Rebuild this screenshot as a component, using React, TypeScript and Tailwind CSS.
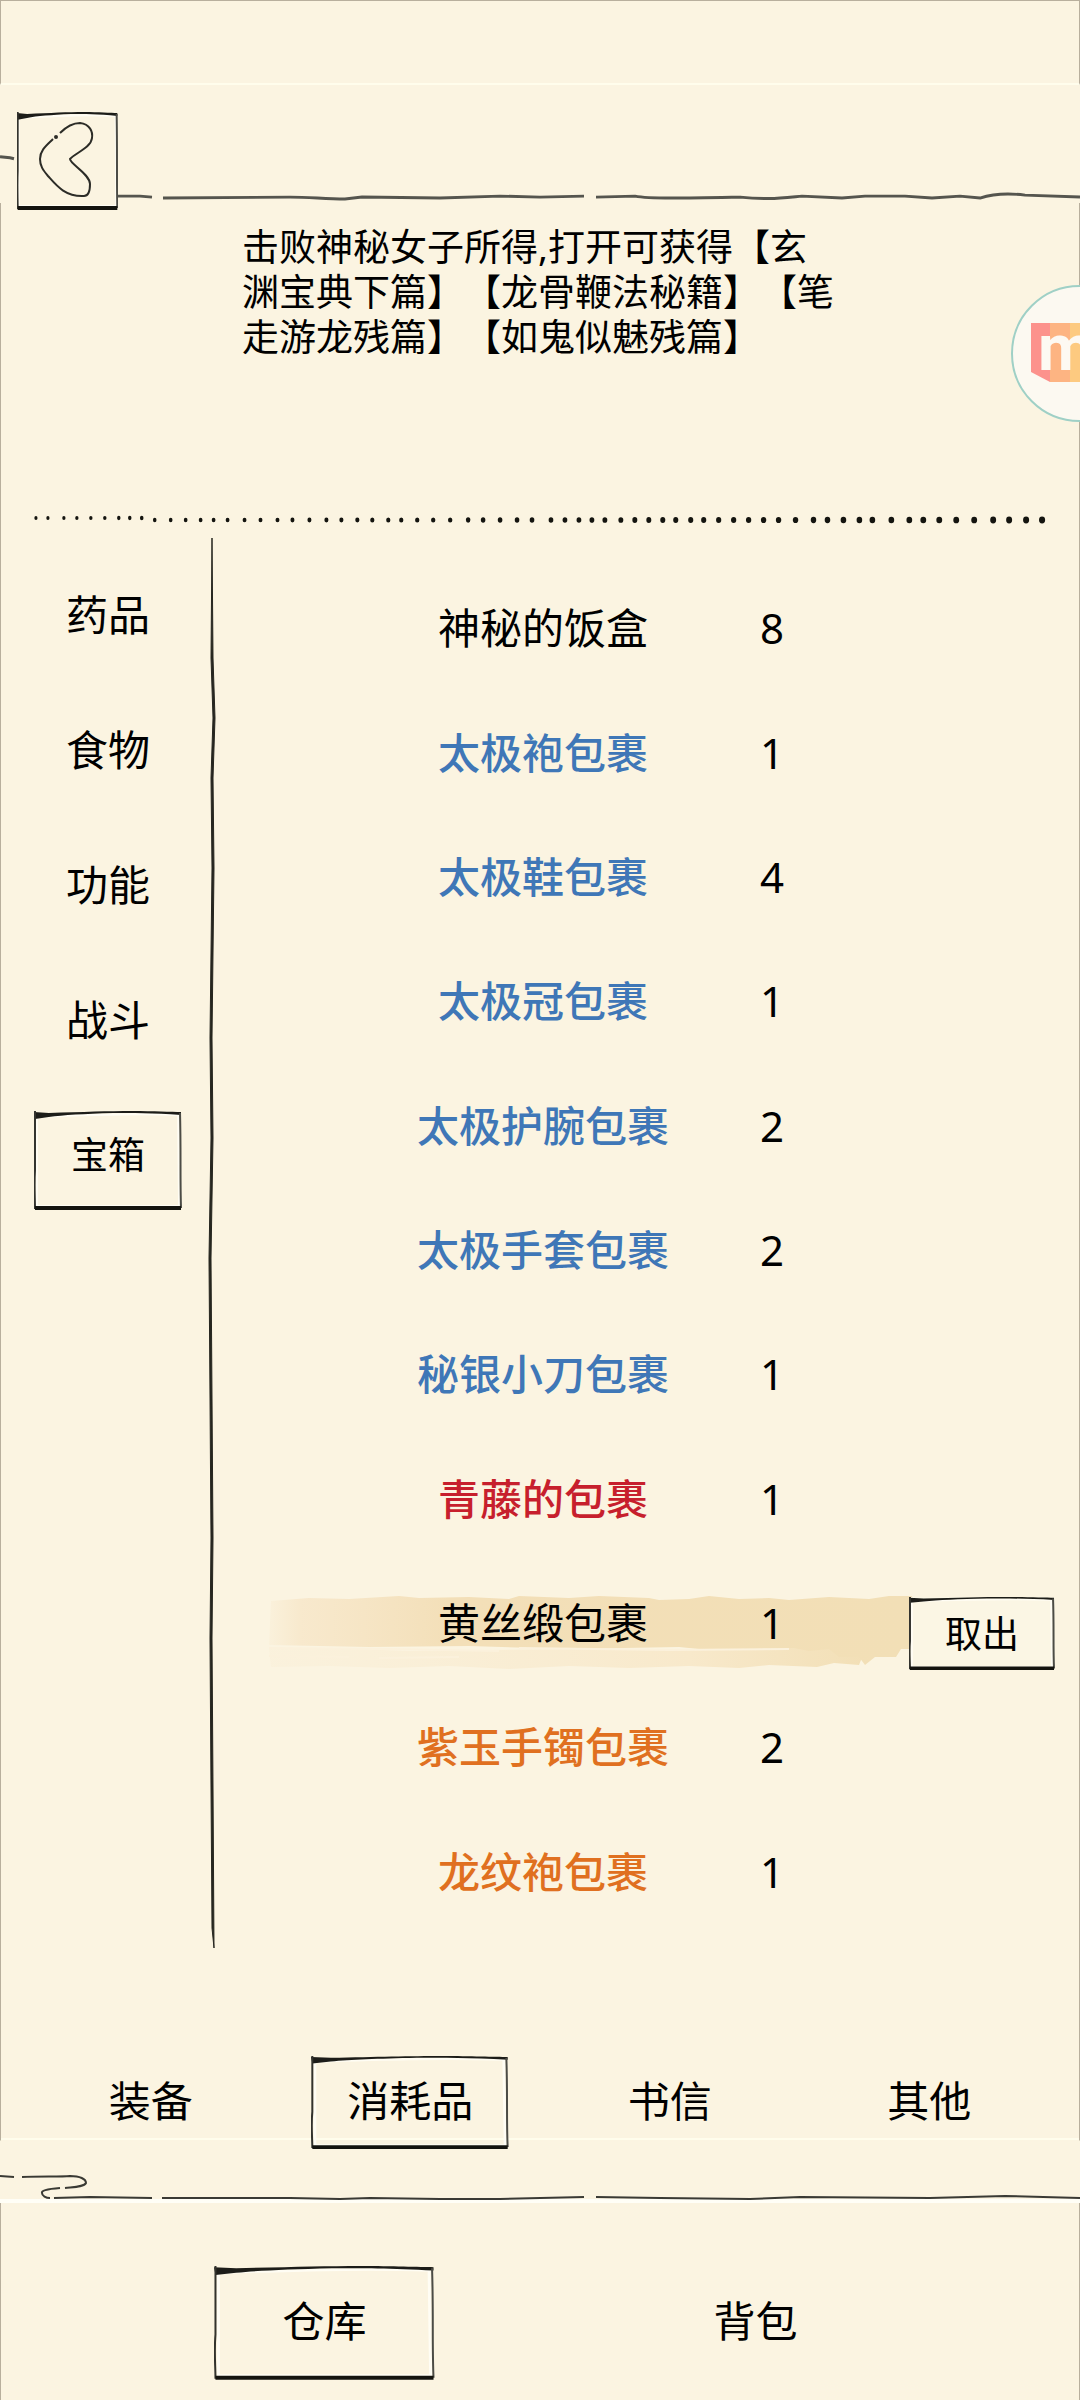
import { useState } from 'react';
import clsx from 'clsx';

type Item = {
  name: string;
  count: number;
  color: string;
};

const items: Item[] = [
  { name: '神秘的饭盒', count: 8, color: 'text-black' },
  { name: '太极袍包裹', count: 1, color: 'text-[#3f77b7] font-medium' },
  { name: '太极鞋包裹', count: 4, color: 'text-[#3f77b7] font-medium' },
  { name: '太极冠包裹', count: 1, color: 'text-[#3f77b7] font-medium' },
  { name: '太极护腕包裹', count: 2, color: 'text-[#3f77b7] font-medium' },
  { name: '太极手套包裹', count: 2, color: 'text-[#3f77b7] font-medium' },
  { name: '秘银小刀包裹', count: 1, color: 'text-[#3f77b7] font-medium' },
  { name: '青藤的包裹', count: 1, color: 'text-[#c71f2d] font-medium' },
  { name: '黄丝缎包裹', count: 1, color: 'text-black' },
  { name: '紫玉手镯包裹', count: 2, color: 'text-[#e07020] font-medium' },
  { name: '龙纹袍包裹', count: 1, color: 'text-[#e07020] font-medium' },
];

const categories = ['药品', '食物', '功能', '战斗', '宝箱'];
const kinds = ['装备', '消耗品', '书信', '其他'];
const stores = ['仓库', '背包'];

const dots = [
  35, 47, 63, 76, 90, 104, 118, 129, 141, 154, 170, 185, 200, 213, 227, 244, 260, 277, 292, 309,
  326, 341, 357, 372, 388, 401, 417, 433, 450, 468, 483, 500, 517, 532, 551, 565, 579, 592, 605,
  621, 635, 649, 663, 676, 691, 704, 719, 734, 749, 764, 779, 796, 814, 828, 844, 860, 873, 892,
  910, 924, 940, 957, 975, 994, 1010, 1027, 1043,
];

// Ink-brushed box, stretched to whatever it frames
function InkFrame() {
  return (
    <svg
      className="absolute inset-0 w-full h-full pointer-events-none"
      viewBox="0 0 150 100"
      preserveAspectRatio="none"
      fill="none"
      aria-hidden="true"
    >
      <path d="M3 6 C50 4 100 2 146 4 L147 96 L3 96 Z" stroke="#fffdf4" strokeWidth="2" />
      <path d="M0 1 L15 2 C50 1 75 0 100 0 C120 0 140 1 149 1 L149 4 C120 2 100 2 80 2 C50 3 30 4 15 6 L1 8 Z" fill="#1c1c18" />
      <path d="M1 0 L1 60 C0 75 1 88 1 99" stroke="#33332e" strokeWidth="2" vectorEffect="non-scaling-stroke" />
      <path d="M148 2 C149 40 148 70 149 98" stroke="#4c4c46" strokeWidth="2" vectorEffect="non-scaling-stroke" />
      <path d="M1 98 L149 98" stroke="#14140f" strokeWidth="4" vectorEffect="non-scaling-stroke" />
    </svg>
  );
}

function BrushStroke() {
  return (
    <svg
      className="absolute left-[51px] w-[643px] h-[74px] mt-[18px] pointer-events-none"
      viewBox="0 0 643 74"
      preserveAspectRatio="none"
      aria-hidden="true"
    >
      <defs>
        <linearGradient id="wash" x1="0" x2="1">
          <stop offset="0" stopColor="#f7e6c6" stopOpacity="0.2" />
          <stop offset="0.05" stopColor="#f7e6c8" stopOpacity="0.8" />
          <stop offset="0.28" stopColor="#f3dfb8" />
          <stop offset="1" stopColor="#f2dfb6" />
        </linearGradient>
        <linearGradient id="wash-dry" x1="0" x2="1">
          <stop offset="0" stopColor="#f9ecd2" stopOpacity="0.3" />
          <stop offset="0.7" stopColor="#f8e9cb" />
          <stop offset="1" stopColor="#f2dfb6" />
        </linearGradient>
      </defs>
      <path
        d="M0 54 L60 53 L140 56 L300 54 L450 55 L600 50 L594 60 L590 70 L565 68 L548 72 L500 70 L470 73 L420 71 L360 73 L300 71 L240 74 L180 71 L120 73 L60 71 L2 72 Z"
        fill="url(#wash-dry)"
      />
      <path
        d="M2 6 L40 3 L80 4 L130 1 L150 3 L200 2 L240 4 L250 1 L300 3 L330 1 L380 3 L390 5 L420 4 L440 1 L470 4 L500 3 L520 5 L560 2 L600 4 L620 1 L643 1 L643 54 L632 54 L627 62 L606 62 L596 70 L590 62 L570 62 L560 54 L540 56 L525 53 L440 55 L410 52 L300 54 L200 51 L100 52 L0 50 Z"
        fill="url(#wash)"
      />
      <g stroke="#fbf1dc" strokeWidth="2" fill="none">
        <path d="M0 53 L120 54 L230 56 M250 53 L400 55 L520 54" />
        <path d="M0 61 L80 62 M110 63 L190 62" />
      </g>
    </svg>
  );
}

function TopRule() {
  return (
    <svg
      className="absolute inset-0 w-full h-full"
      viewBox="0 0 1080 120"
      preserveAspectRatio="none"
      fill="none"
      stroke="#55554e"
      strokeWidth="3"
      aria-hidden="true"
    >
      <path d="M0 73 L10 74 L14 75" />
      <path d="M117 113 L140 113 L152 114" />
      <path d="M163 115 L290 114 C310 114 325 116 345 116 L362 114 L440 115 L500 113 L540 114 L584 113" />
      <path d="M596 114 L635 113 C650 116 690 115 740 114 C765 117 780 115 802 113 L842 115 L865 113 L905 113 L932 115 L960 113 L980 115 C995 110 1010 110 1025 112 L1080 114" />
    </svg>
  );
}

function CloudRule() {
  return (
    <svg
      className="block w-full h-[62px]"
      viewBox="0 0 1080 62"
      preserveAspectRatio="none"
      fill="none"
      stroke="#3a3a34"
      strokeWidth="2"
      aria-hidden="true"
    >
      <path d="M0 60 L1080 60" stroke="#fffef6" strokeWidth="4" />
      <path d="M0 35 L14 36" />
      <path d="M22 36 C40 35 60 36 70 35 C80 35 86 38 86 42 C84 46 74 46 65 47" />
      <path d="M60 47 C46 48 41 50 42 52 C42 55 46 57 50 57" />
      <path d="M54 57 L90 56 L152 57" />
      <path d="M162 57 L290 57 L340 58 L370 57 L440 58 L500 58 L584 56" />
      <path d="M596 56 L660 57 L750 58 L800 56 L930 57 L1005 55 L1080 57" />
    </svg>
  );
}

function RecorderBadge() {
  return (
    <button
      type="button"
      aria-label="录屏"
      className="absolute right-[-69px] top-[82px] w-[137px] h-[137px] rounded-full border-2 border-[#9fd0c6] bg-[#fcf9f1] overflow-hidden"
    >
      <svg className="absolute left-[18px] top-[36px]" width="98" height="60" viewBox="0 0 98 60" aria-hidden="true">
        <path d="M0 0 H19 V59 L0 49 Z" fill="#fc928c" />
        <path d="M19 0 H39 V59 H19 Z" fill="#fdb482" />
        <path d="M39 0 H98 V59 H39 Z" fill="#fdca80" />
        <text x="7" y="47" fill="#fdf9f2" fontFamily="Roboto, sans-serif" fontWeight="700" fontSize="64">m</text>
      </svg>
    </button>
  );
}

export default function App() {
  const [category, setCategory] = useState('宝箱');
  const [kind, setKind] = useState('消耗品');
  const [store, setStore] = useState('仓库');
  const [selected, setSelected] = useState('黄丝缎包裹');

  return (
    <div className="min-h-screen overflow-hidden bg-[#fbf4e1] text-black text-[42px] leading-[60px] font-['Noto_Sans','Noto_Sans_CJK_SC',sans-serif]">
      <div className="h-[85px] border-x border-t border-b-2 border-[#b8af9d] border-b-[#fffdec]" />

      <header className="relative h-[118px]">
        <TopRule />
        <button type="button" aria-label="返回" className="relative ml-[17px] mt-[27px] w-[101px] h-[98px] bg-[#fbf4e1]">
          <InkFrame />
          <svg className="w-full h-full" viewBox="0 0 101 98" fill="none" stroke="#2c2c27" strokeWidth="2" aria-hidden="true">
            <path d="M43 21 C50 14 56 11 63 11 C73 12 76 20 75 26 C74 36 58 41 53 47 C53 52 73 62 73 72 C73 82 70 84 67 84 C48 85 39 73 31 64 C26 58 23 54 23 47 C23 38 30 33 36 27" />
            <circle cx="39" cy="25" r="1" />
          </svg>
        </button>
      </header>

      <div className="border-x border-b border-[#b8af9d] border-b-transparent">
        <section className="relative min-h-[309px] pt-[21px] pl-[241px]">
          <p className="w-[600px] text-[37px] leading-[45px] [text-spacing-trim:space-all]">
            击败神秘女子所得,打开可获得【玄渊宝典下篇】【龙骨鞭法秘籍】【笔走游龙残篇】【如鬼似魅残篇】
          </p>
          <RecorderBadge />
        </section>

        <svg className="block w-full h-[14px]" viewBox="0 0 1080 14" preserveAspectRatio="none" aria-hidden="true">
          {dots.map((x, i) => (
            <ellipse key={x} cx={x} cy={i > 8 ? 8 : 6} rx={1.6 + i * 0.022} ry={2 + i * 0.022} fill="#14140f" />
          ))}
        </svg>

        <main className="flex pt-[12px]">
          <nav className="flex flex-col gap-9 pt-[33px] pl-[33px] w-[207px] shrink-0">
            {categories.map((c) => (
              <button
                key={c}
                type="button"
                onClick={() => setCategory(c)}
                className={clsx('relative w-[148px] h-[99px] pb-3', c === category && 'text-[37px]')}
              >
                {c === category && <InkFrame />}
                {c}
              </button>
            ))}
          </nav>

          <svg className="w-[10px] shrink-0" viewBox="0 0 10 1412" preserveAspectRatio="none" aria-hidden="true">
            <path
              d="M4 0 L5 120 L7 180 L5 240 L6 330 L4 500 L5 600 L3 720 L4 860 L5 1000 L4 1100 L5 1250 L6 1410 L4 1390 L3 1250 L2 1100 L3 1000 L2 860 L1 720 L3 600 L2 500 L4 330 L3 240 L5 180 L3 120 Z"
              fill="#26261f"
              stroke="#26261f"
              strokeWidth="1"
            />
          </svg>

          <ul className="flex-1 grid auto-rows-fr min-h-[1368px] mt-[28px] mb-[16px]">
            {items.map((item) => (
              <li key={item.name} className="relative flex items-center pl-[197px]">
                {item.name === selected && <BrushStroke />}
                <button
                  type="button"
                  onClick={() => setSelected(item.name)}
                  className={clsx('relative w-[256px] whitespace-nowrap text-center', item.color)}
                >
                  {item.name}
                </button>
                <span className="relative ml-[51px] w-[100px] text-center">{item.count}</span>
                {item.name === selected && (
                  <button type="button" className="relative ml-auto mr-[24px] mt-[21px] w-[146px] h-[73px] text-[37px] bg-[#fbf6e4]">
                    <InkFrame />
                    取出
                  </button>
                )}
              </li>
            ))}
          </ul>
        </main>

        <nav className="grid grid-cols-4 px-[20px] pt-[106px] h-[190px] border-b-2 border-[#fffdec]">
          {kinds.map((k) => (
            <button key={k} type="button" onClick={() => setKind(k)} className="relative justify-self-center w-[198px] h-[93px] pb-1">
              {k === kind && <InkFrame />}
              {k}
            </button>
          ))}
        </nav>
      </div>

      <CloudRule />

      <footer className="grid grid-cols-2 px-[10%] pt-[63px] pb-[20px] border-x border-b border-[#b8af9d]">
        {stores.map((s) => (
          <button key={s} type="button" onClick={() => setStore(s)} className="relative justify-self-center w-[221px] h-[114px] pb-1">
            {s === store && <InkFrame />}
            {s}
          </button>
        ))}
      </footer>
    </div>
  );
}
